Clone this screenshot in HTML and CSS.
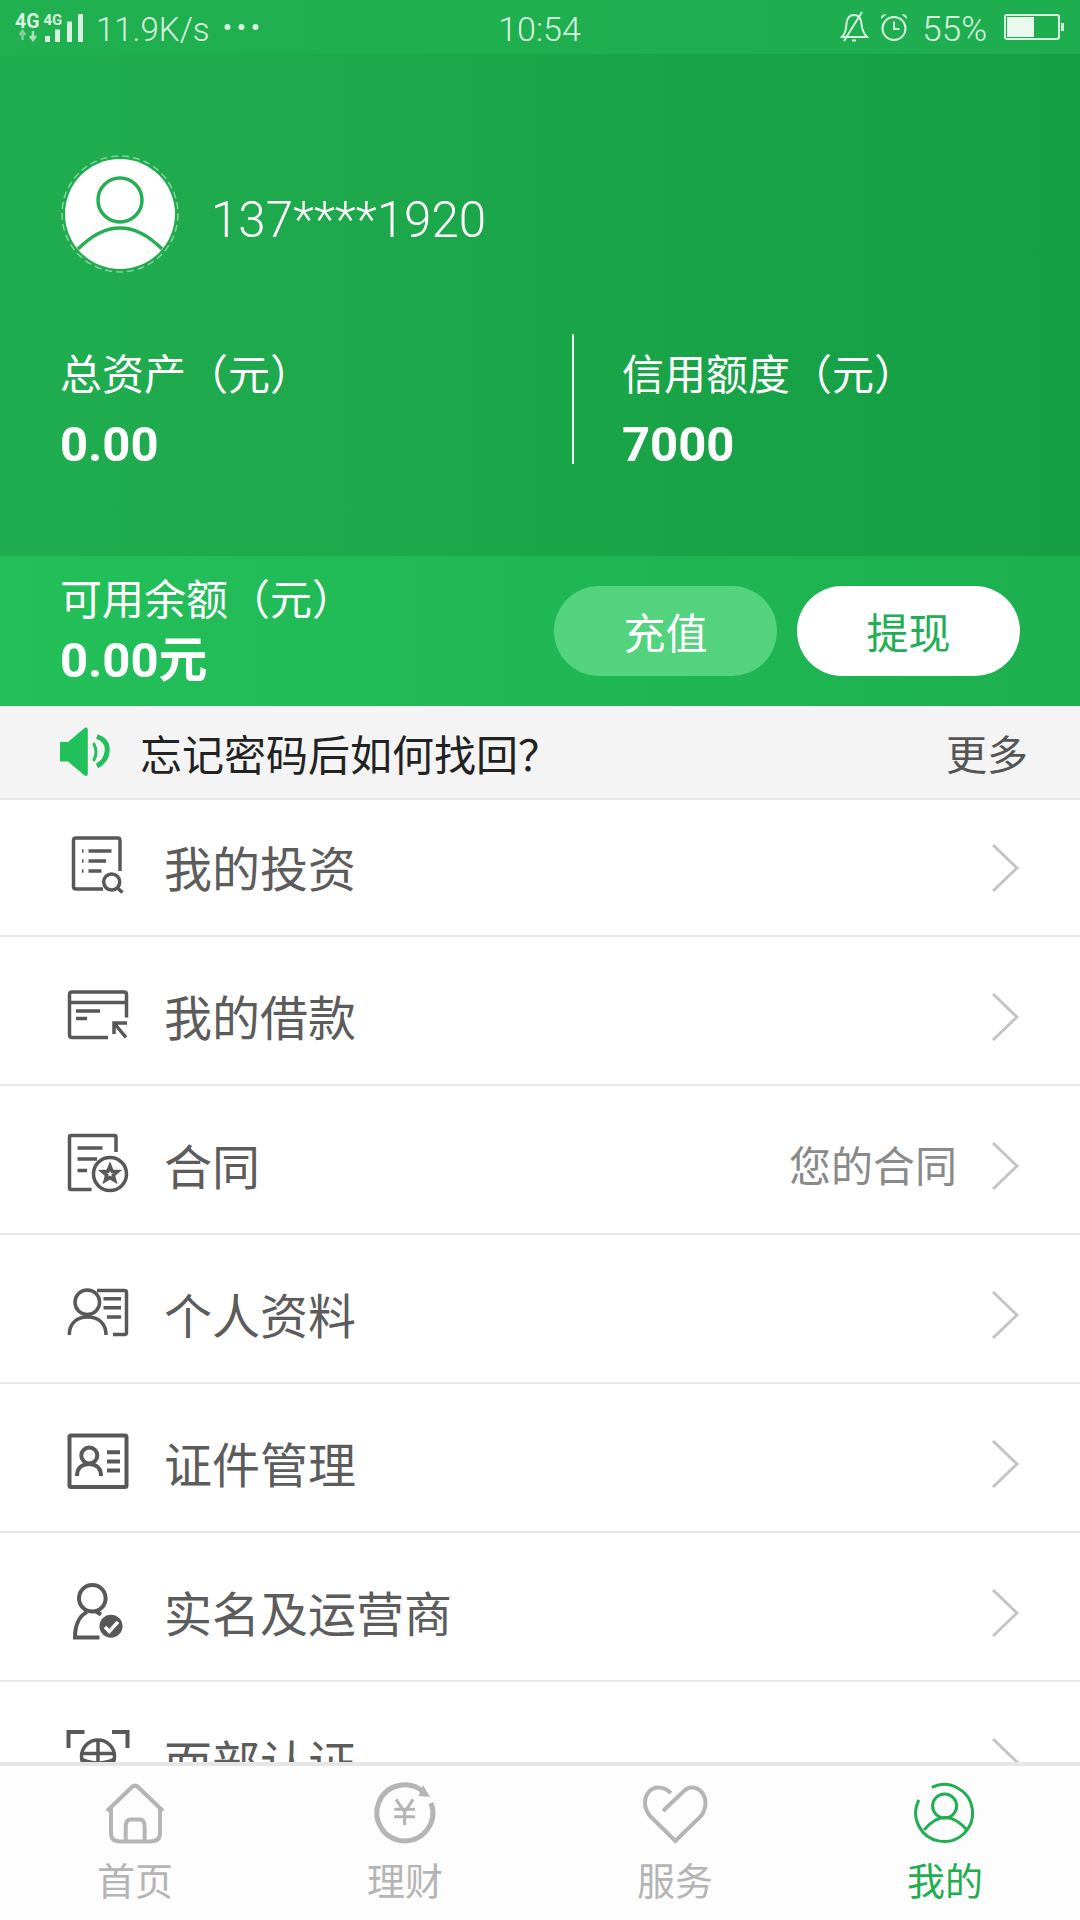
FILE: index.html
```html
<!DOCTYPE html>
<html lang="zh-CN">
<head>
<meta charset="utf-8">
<title>我的</title>
<link rel="stylesheet" href="styles.css">
</head>
<body>
<div class="app">
  <header class="status">
    <div class="status-left">
      <svg class="net" width="68" height="30" viewBox="0 0 68 30">
        <text x="0" y="16" class="g-big">4G</text>
        <text x="28.5" y="12.5" class="g-small">4G</text>
        <path d="M7.5 28V20M4.5 23L7.5 19L10.5 23" class="arrow-dim"/>
        <path d="M18 19V27M15 24L18 28L21 24" class="arrow"/>
        <rect x="30" y="24" width="5" height="6" class="bar"/>
        <rect x="40" y="17.5" width="5" height="12.5" class="bar"/>
        <rect x="52" y="9.5" width="5" height="20.5" class="bar"/>
        <rect x="63" y="2" width="5" height="28" class="bar"/>
      </svg>
      <span class="speed">11.9K/s</span>
      <svg class="dots" width="35" height="8" viewBox="0 0 35 8">
        <circle cx="3.5" cy="4" r="3" class="bar"/><circle cx="17.5" cy="4" r="3" class="bar"/><circle cx="31.5" cy="4" r="3" class="bar"/>
      </svg>
    </div>
    <div class="time">10:54</div>
    <div class="status-right">
      <svg width="30" height="32" viewBox="0 0 30 32" class="st-line">
        <path d="M2 26C6 22 6 18 6.500 13C7 7 10 4 14 4C18 4 21 7 21.500 13C22 18 23 22 27 26Z"/>
        <path d="M4 30L22 1M12 29.500H16"/>
      </svg>
      <svg width="28" height="28" viewBox="0 0 28 28" class="st-line alarm">
        <circle cx="14" cy="15.500" r="11.500"/>
        <path d="M14 8.500V16H19.500"/>
        <path d="M1 6A4 4 0 0 1 6.500 1.500ZM27 6A4 4 0 0 0 21.500 1.500Z" class="ear"/>
      </svg>
      <span class="pct">55%</span>
      <svg width="60" height="26" viewBox="0 0 60 26">
        <rect x="1" y="1" width="54" height="24" rx="2" class="batt"/>
        <rect x="3" y="3" width="27" height="20" class="batt-fill"/>
        <rect x="57" y="9" width="3" height="8" class="bar"/>
      </svg>
    </div>
  </header>

  <section class="hero">
    <div class="profile">
      <svg class="avatar" width="118" height="118" viewBox="0 0 118 118">
        <circle cx="59" cy="59" r="58" class="av-ring"/>
        <circle cx="59" cy="59" r="55" class="av-disc"/>
        <circle cx="59" cy="45" r="22" class="av-line"/>
        <path d="M17 94Q59 52 101 94" class="av-line"/>
      </svg>
      <span class="phone">137****1920</span>
    </div>
    <div class="stats">
      <div class="stat stat-left">
        <div class="stat-label">总资产（元）</div>
        <div class="stat-value">0.00</div>
      </div>
      <div class="stat stat-right">
        <div class="stat-label">信用额度（元）</div>
        <div class="stat-value">7000</div>
      </div>
    </div>
  </section>

  <section class="balance">
    <div class="balance-info">
      <div class="balance-label">可用余额（元）</div>
      <div class="balance-value">0.00元</div>
    </div>
    <div class="balance-actions">
      <button class="btn btn-soft">充值</button>
      <button class="btn btn-white">提现</button>
    </div>
  </section>

  <section class="notice">
    <svg class="speaker" width="50" height="50" viewBox="0 0 50 50">
      <path d="M1 15H9L25.500 1Q28.800 -0.500 28.800 3V46Q28.800 50 25.500 48.500L9 34.500H1Z" class="sp-fill"/>
      <path d="M34.500 16Q39.500 25 34.500 34" class="sp-line"/>
      <path d="M38 9.500Q50 14 48 25Q47 34 38 39" class="sp-line sp-thick"/>
    </svg>
    <span class="notice-text">忘记密码后如何找回？</span>
    <span class="notice-more">更多</span>
  </section>

  <main class="list">
    <div class="row row-first">
      <svg class="ico" width="64" height="64" viewBox="0 0 64 64">
        <path d="M37 53H10Q7.500 53 7.500 50.500V4.500Q7.500 2 10 2H51.500Q54 2 54 4.500V35"/>
        <path d="M22.500 15H45.500M22.500 25H40M22.500 35H35.500"/>
        <path d="M16 15H17.500M16 25H17.500M16 35H17.500"/>
        <circle cx="45.700" cy="46" r="8"/>
        <path d="M51.500 52L56.500 56.500"/>
      </svg>
      <span class="row-title">我的投资</span>
      <svg class="chev" width="30" height="50" viewBox="0 0 30 50"><path d="M3 2L27 25L3 48"/></svg>
    </div>
    <div class="row">
      <svg class="ico" width="64" height="64" viewBox="0 0 64 64">
        <path d="M42 52.500H6Q3.500 52.500 3.500 50V9.500Q3.500 7 6 7H58Q60.500 7 60.500 9.500V32.500"/>
        <path d="M3.500 17.500H60.500M10 26H34M10 33.500H21"/>
        <path d="M61 38H48V49M48 38L60 52.500"/>
      </svg>
      <span class="row-title">我的借款</span>
      <svg class="chev" width="30" height="50" viewBox="0 0 30 50"><path d="M3 2L27 25L3 48"/></svg>
    </div>
    <div class="row">
      <svg class="ico" width="64" height="64" viewBox="0 0 64 64">
        <path d="M25.500 55.500H5Q3.500 55.500 3.500 54V3Q3.500 1.500 5 1.500H48.500Q50 1.500 50 3V18"/>
        <path d="M11.500 14H36.500M11.500 25H31M11.500 36.500H21"/>
        <circle cx="44" cy="40" r="16.500"/>
        <path d="M44 32L46.100 37.200L51.600 37.500L47.300 41.100L48.700 46.500L44 43.500L39.300 46.500L40.700 41.100L36.400 37.500L41.900 37.200Z"/>
      </svg>
      <span class="row-title">合同</span>
      <span class="row-note">您的合同</span>
      <svg class="chev" width="30" height="50" viewBox="0 0 30 50"><path d="M3 2L27 25L3 48"/></svg>
    </div>
    <div class="row">
      <svg class="ico" width="64" height="64" viewBox="0 0 64 64">
        <circle cx="21.300" cy="19.200" r="12.300"/>
        <path d="M3.300 52C3.300 40 11 34 21.600 34S40 40 40 52"/>
        <path d="M31 7.500H58.500Q60.500 7.500 60.500 9.500V49.500Q60.500 51.500 58.500 51.500H47"/>
        <path d="M37.500 15.800H55M37.500 24.800H55M41 34H55"/>
      </svg>
      <span class="row-title">个人资料</span>
      <svg class="chev" width="30" height="50" viewBox="0 0 30 50"><path d="M3 2L27 25L3 48"/></svg>
    </div>
    <div class="row">
      <svg class="ico" width="64" height="64" viewBox="0 0 64 64">
        <rect x="3.500" y="3.500" width="57" height="51.500" rx="1.500" class="thick"/>
        <circle cx="23.300" cy="23.500" r="8" class="thick"/>
        <path d="M11 44C11 36 16 32 23 32S35 36 35 44" class="thick"/>
        <path d="M41 20.200H54M41 29.500H54M41 38.500H54" class="thick"/>
      </svg>
      <span class="row-title">证件管理</span>
      <svg class="chev" width="30" height="50" viewBox="0 0 30 50"><path d="M3 2L27 25L3 48"/></svg>
    </div>
    <div class="row">
      <svg class="ico" width="64" height="64" viewBox="0 0 64 64">
        <circle cx="26.300" cy="17.200" r="13.300" class="thick"/>
        <path d="M21 31C13 35 9 45 9 56.500H33.500" class="thick"/>
        <path d="M30 30.500L35 33.500" class="thick"/>
        <circle cx="45" cy="45.200" r="11.500" class="solid"/>
        <path d="M39 46L43.300 50.500L52 40.800" class="check"/>
      </svg>
      <span class="row-title">实名及运营商</span>
      <svg class="chev" width="30" height="50" viewBox="0 0 30 50"><path d="M3 2L27 25L3 48"/></svg>
    </div>
    <div class="row">
      <svg class="ico" width="64" height="64" viewBox="0 0 64 64">
        <path d="M2.500 18V2H18.500M46 2H61.500V18" class="thick"/>
        <circle cx="32" cy="26.500" r="16.500"/>
        <path d="M32 10V42M15.500 23.500H48.500M15.500 29Q32 37 48.500 29"/>
      </svg>
      <span class="row-title">面部认证</span>
      <svg class="chev" width="30" height="50" viewBox="0 0 30 50"><path d="M3 2L27 25L3 48"/></svg>
    </div>
  </main>

  <nav class="tabs">
    <div class="tab">
      <svg class="tab-ico" width="64" height="64" viewBox="0 0 64 64">
        <path d="M4 30L29 6Q32 3 35 6L60 30"/>
        <path d="M8 27V52Q8 60.500 17 60.500H47Q57 60.500 57 52V27"/>
        <path d="M22.700 60.500V45Q22.700 38.500 28 38.500H36.500Q41.600 38.500 41.600 45V60.500"/>
      </svg>
      <span class="tab-label">首页</span>
    </div>
    <div class="tab">
      <svg class="tab-ico" width="64" height="64" viewBox="0 0 64 64">
        <path d="M58 22A28 28 0 1 1 51 11.500" class="tab-ring"/>
        <path d="M50 4L57 16L45.500 15Z" class="tab-fill"/>
        <path d="M23 18.300L31.600 31L40.200 18.300M21.300 28.300H42M21.300 35.700H42M31.600 31V44" class="tab-thin"/>
      </svg>
      <span class="tab-label">理财</span>
    </div>
    <div class="tab">
      <svg class="tab-ico" width="64" height="64" viewBox="0 0 64 64">
        <path d="M28 12C24 8 19 6.500 15 6.500C7 6.500 2 14 2 22C2 27 4 31 7 35L32.400 60L58 35C61 31 62.500 27 62.500 22C62.500 13 56 6.500 49 6.500C45 6.500 42 8.500 40 11L20 30"/>
      </svg>
      <span class="tab-label">服务</span>
    </div>
    <div class="tab tab-active">
      <svg class="tab-ico" width="64" height="64" viewBox="0 0 64 64">
        <path d="M18.900 6.300A28.500 28.500 0 1 1 5.800 19" class="tab-me"/>
        <circle cx="31.600" cy="25" r="12" class="tab-me"/>
        <path d="M11 49Q32 24 54 49" class="tab-me"/>
      </svg>
      <span class="tab-label">我的</span>
    </div>
  </nav>
</div>
</body>
</html>
```

FILE: styles.css
```css
* { box-sizing: border-box; }
html, body { margin: 0; padding: 0; }
body { font-family: Roboto, "Noto Sans CJK SC", sans-serif; background: #fff; }
.app { width: 1080px; height: 1920px; display: flex; flex-direction: column; overflow: hidden; }

/* status bar */
.status { height: 54px; padding: 0 16px 0 15px; display: grid; grid-template-columns: 1fr auto 1fr; align-items: center; background: linear-gradient(90deg, #20b04f, #1eae50); color: #d8f3e0; font-size: 33px; font-weight: 300; }
.status-left { display: flex; align-items: center; }
.status-right { display: flex; align-items: center; justify-content: flex-end; }
.net { margin-right: 13px; flex: none; overflow: visible; }
.speed { margin-right: 14px; padding-top: 4px; line-height: 1; }
.time { font-size: 34px; line-height: 1; padding-top: 4px; }
.g-big { font: 700 19.500px Roboto, sans-serif; fill: #d8f3e0; }
.g-small { font: 700 15px Roboto, sans-serif; fill: #d8f3e0; }
.arrow { fill: none; stroke: #a6e0b9; stroke-width: 2.500; }
.arrow-dim { fill: none; stroke: #7fd09b; stroke-width: 2.500; }
.bar { fill: #d8f3e0; }
.st-line { fill: none; stroke: #d8f3e0; stroke-width: 2; }
.alarm { margin: 0 14px 0 10px; }
.ear { fill: #d8f3e0; stroke: none; }
.pct { font-size: 35px; line-height: 1; padding-top: 4px; margin-right: 17px; }
.batt { fill: none; stroke: #d8f3e0; stroke-width: 2; }
.batt-fill { fill: #eaf8ee; }

/* hero */
.hero { height: 502px; padding: 101px 0 0 60px; background: linear-gradient(90deg, #20ad4f, #159e44); color: #fff; }
.profile { display: flex; align-items: center; height: 118px; }
.avatar { flex: none; margin: 0 32px 0 1px; }
.av-ring { fill: none; stroke: rgba(255, 255, 255, .45); stroke-width: 1.500; stroke-dasharray: 7 4; }
.av-disc { fill: #fff; }
.av-line { fill: none; stroke: #26ae55; stroke-width: 3.500; }
.phone { font-size: 49.300px; font-weight: 300; line-height: 60px; margin-top: 12px; }
.stats { display: flex; height: 130px; margin-top: 61px; }
.stat { display: flex; flex-direction: column; padding-top: 22px; }
.stat-left { width: 512px; }
.stat-right { border-left: 2px solid #eaf8ee; padding-left: 48px; }
.stat-label { font-size: 42px; line-height: 40px; font-weight: 400; white-space: nowrap; }
.stat-value { font-size: 49px; line-height: 37px; font-weight: 700; margin-top: 30px; }

/* balance */
.balance { height: 150px; padding: 0 60px 0 60px; display: flex; align-items: center; justify-content: space-between; background: linear-gradient(90deg, #23c05a, #1cb04e); color: #fff; }
.balance-info { padding-top: 4px; }
.balance-label { font-size: 42px; line-height: 50px; font-weight: 400; }
.balance-value { font-size: 49px; line-height: 60px; font-weight: 700; margin-top: 5px; }
.balance-actions { display: flex; gap: 20px; }
.btn { width: 223px; height: 90px; border: 0; border-radius: 45px; padding: 0 0 2px; font: 400 42px Roboto, "Noto Sans CJK SC", sans-serif; }
.btn-soft { background: #54d37f; color: #fff; }
.btn-white { background: #fff; color: #22ae55; }

/* notice */
.notice { height: 94px; padding: 0 52px 0 59px; display: flex; align-items: center; background: #f4f4f4; border-bottom: 2px solid #e8e8e8; }
.speaker { flex: none; margin-right: 31px; overflow: visible; }
.sp-fill { fill: #22c05a; }
.sp-line { fill: none; stroke: #22c05a; stroke-width: 3; }
.sp-thick { stroke-width: 5; }
.notice-text { flex: 1; font-size: 42px; font-weight: 400; color: #222; }
.notice-more { font-size: 41px; font-weight: 400; color: #555; }

/* list */
.list { flex: 1; overflow: hidden; background: #fff; }
.row { height: 149px; padding: 12px 60px 0 66px; display: flex; align-items: center; border-bottom: 2px solid #e8e8e8; }
.row-first { height: 137px; padding-top: 0; }
.ico { flex: none; margin-right: 34px; overflow: visible; fill: none; stroke: #585858; stroke-width: 3.500; }
.thick { stroke-width: 4; }
.solid { fill: #585858; stroke: none; }
.check { stroke: #fff; stroke-width: 3.500; }
.row-title { flex: 1; font-size: 48px; font-weight: 400; color: #5c5c5c; padding-bottom: 4px; }
.row-note { font-size: 42px; font-weight: 400; color: #8a8a8a; margin-right: 33px; padding-bottom: 4px; }
.chev { flex: none; fill: none; stroke: #c4c4c4; stroke-width: 3; }

/* tab bar */
.tabs { height: 158px; flex: none; display: grid; grid-template-columns: repeat(4, 1fr); background: #fdfdfd; border-top: 4px solid #e6e6e6; }
.tab { display: flex; flex-direction: column; align-items: center; padding-top: 15px; color: #b5b5b5; }
.tab-ico { fill: none; stroke: #b5b5b5; stroke-width: 4; overflow: visible; }
.tab-ring { stroke-width: 5; }
.tab-fill { fill: #b5b5b5; stroke: none; }
.tab-thin { stroke-width: 3; }
.tab-me { stroke: #1fae50; stroke-width: 3; }
.tab-label { font-size: 38px; font-weight: 400; line-height: 40px; margin-top: 17px; }
.tab-active { color: #1fae50; }
```
